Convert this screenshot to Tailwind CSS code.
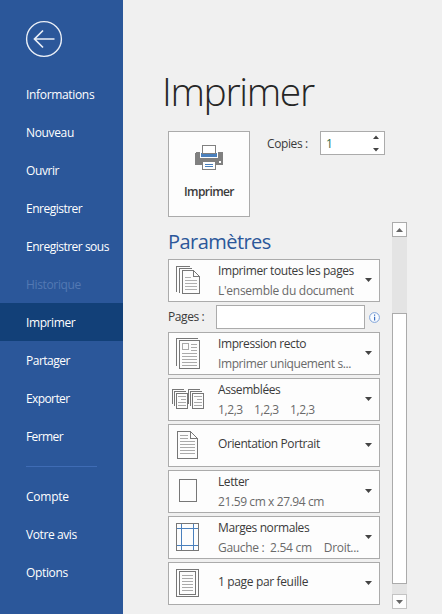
<!DOCTYPE html>
<html lang="fr">
<head>
<meta charset="utf-8">
<title>Imprimer</title>
<script src="https://cdn.jsdelivr.net/npm/@tailwindcss/browser@4"></script>
</head>
<body class="flex h-[614px] w-[442px] overflow-hidden bg-[#f0f0f0] font-['Open_Sans','Noto_Sans',sans-serif] text-[12px] tracking-[-0.4px] text-[#3b3b3b]">
<nav class="flex h-full w-[123px] shrink-0 flex-col bg-[#2b579a] text-white whitespace-nowrap">
  <div class="h-[76px] pl-[25px] pt-[20px]">
    <svg width="38" height="38" viewBox="0 0 38 38" fill="none" stroke="#e9eef6"><circle cx="19" cy="19" r="17.4" stroke-width="1.4"/><path d="M29.500 19H10M18 10.500L9.500 19L18 27.500" stroke-width="1.7"/></svg>
  </div>
  <a class="h-[38px] pl-[26px] leading-[38px] tracking-[-0.33px]">Informations</a>
  <a class="h-[38px] pl-[26px] leading-[38px] tracking-[-0.35px]">Nouveau</a>
  <a class="h-[38px] pl-[26px] leading-[38px]">Ouvrir</a>
  <a class="h-[38px] pl-[26px] leading-[38px] tracking-[-0.5px]">Enregistrer</a>
  <a class="h-[38px] pl-[26px] leading-[38px] tracking-[-0.5px]">Enregistrer sous</a>
  <a class="h-[37px] pl-[26px] leading-[38px] tracking-[-0.35px] text-[#5379b3]">Historique</a>
  <a class="h-[38px] bg-[#124078] pl-[26px] leading-[39px]">Imprimer</a>
  <a class="h-[38px] pl-[26px] leading-[39px] tracking-[-0.5px]">Partager</a>
  <a class="h-[38px] pl-[26px] leading-[39px] tracking-[-0.6px]">Exporter</a>
  <a class="h-[38px] pl-[26px] leading-[39px] tracking-[-0.6px]">Fermer</a>
  <div class="ml-[26px] mt-[11px] mb-[11px] h-px w-[71px] bg-[#3f6cb5]"></div>
  <a class="h-[38px] pl-[26px] leading-[38px] tracking-[-0.25px]">Compte</a>
  <a class="h-[38px] pl-[26px] leading-[38px]">Votre avis</a>
  <a class="h-[38px] pl-[26px] leading-[38px] tracking-[-0.35px]">Options</a>
</nav>
<main class="flex flex-1 flex-col pl-[45px] whitespace-nowrap">
  <h1 class="-ml-[6px] mt-[61px] h-[70px] text-[39px] font-light leading-[60px] tracking-[-1.35px] text-[#262626]">Imprimer</h1>
  <div class="flex h-[91px]">
    <button class="flex h-[86px] w-[82px] flex-col items-center border border-[#ababab] bg-[#fdfdfd] pt-[13px] font-semibold tracking-[-0.6px]">
      <svg width="28" height="26" viewBox="0 0 28 26" shape-rendering="crispEdges"><path d="M1 7H27L28 8V20H0V8Z" fill="#808080"/><path d="M5 6H23V13H5Z" fill="#fff"/><path d="M6 8H22V12H6Z" fill="#4a80bd"/><path d="M7.500 .5H20.500V8.500H7.500Z" fill="#fff" stroke="#808080"/><path d="M7.500 16.500H20.500V24.500H7.500Z" fill="#fff" stroke="#808080"/><path d="M10 19.500H18M10 21.500H18" stroke="#4a80bd"/><path d="M24 16H26V18H24Z" fill="#fff"/></svg>
      <span class="mt-[12px] leading-[18px]">Imprimer</span>
    </button>
    <span class="ml-[17px] w-[53px] leading-[25px]">Copies :</span>
    <div class="flex h-[24px] w-[65px] justify-between border border-[#ababab] bg-white pl-[5px] pr-[5px] text-[#2d6b4a]">
      <span class="leading-[23px]">1</span>
      <svg width="6" height="22" viewBox="0 0 6 22" fill="#444"><path d="M0 7L3 3.500L6 7ZM0 16L3 19.500L6 16Z"/></svg>
    </div>
  </div>
  <div class="flex">
    <section class="w-[212px]">
      <h2 class="h-[37px] text-[20px] leading-[39px] tracking-[-0.55px] text-[#2b579a]">Paramètres</h2>
      <div class="flex flex-col gap-[3px]">
        <div class="flex h-[43px] items-center border border-[#ababab] bg-[#fdfdfd] pr-[7px]">
          <svg class="-mt-px ml-[7px] mr-[17px] shrink-0" width="25" height="28" viewBox="0 0 25 28" fill="none" stroke="#777" shape-rendering="crispEdges"><path d="M.5 26V.5H14M3.500 27V2.500H16M17.500 4.500H6.500V27.500H23.500V10.500L17.500 4.500V10.500H23.500"/><path d="M9 11.500H15M9 14.500H21M9 17.500H21M9 20.500H21M9 23.500H21" stroke="#b0b0b0"/></svg>
          <div class="min-w-0 flex-1 leading-[20px]"><p>Imprimer toutes les pages</p><p class="tracking-[-0.27px] text-[#6a6a6a]">L'ensemble du document</p></div>
          <svg class="-mt-px shrink-0" width="7" height="4" viewBox="0 0 7 4"><path d="M0 0H7L3.500 4Z" fill="#444"/></svg>
        </div>
        <div class="flex h-[24px] w-[213px] items-center">
          <span class="w-[48px]">Pages :</span>
          <div class="h-[24px] w-[149px] border border-[#ababab] bg-white"></div>
          <svg class="ml-[4px]" width="11" height="11" viewBox="0 0 11 11"><circle cx="5.500" cy="5.500" r="4.900" fill="#f8fbff" stroke="#7fa3d8"/><path d="M5 2.500H6.200V3.700H5ZM5 4.700H6.200V8.500H5Z" fill="#3a6fc0"/></svg>
        </div>
        <div class="flex h-[43px] items-center border border-[#ababab] bg-[#fdfdfd] pr-[7px]">
          <svg class="ml-[7px] mr-[17px] shrink-0" width="25" height="31" viewBox="0 0 25 31" fill="none" stroke="#777" shape-rendering="crispEdges"><path d="M.5 28V.5H22M3.500 2.500H23.500V30.500H3.500Z"/><path d="M6.500 5.500H12.500V11.500H6.500ZM15 6.500H21M15 9.500H21M15 12.500H21M6 15.500H21M6 18.500H21M6 21.500H21M6 24.500H21M6 27.500H21" stroke="#aaa"/></svg>
          <div class="min-w-0 flex-1 leading-[20px]"><p>Impression recto</p><p class="text-[#6a6a6a]">Imprimer uniquement s...</p></div>
          <svg class="-mt-px shrink-0" width="7" height="4" viewBox="0 0 7 4"><path d="M0 0H7L3.500 4Z" fill="#444"/></svg>
        </div>
        <div class="flex h-[43px] items-center border border-[#ababab] bg-[#fdfdfd] pr-[7px]">
          <svg class="-mt-px ml-[3px] mr-[14px] shrink-0" width="32" height="20" viewBox="0 0 32 20" fill="none" stroke="#777" shape-rendering="crispEdges"><path d="M.5 15V.5H12M2.500 17V2.500H14M4.500 4.500H15.500V19.500H4.500ZM16.500 15V.5H28M18.500 17V2.500H30M20.500 4.500H31.500V19.500H20.500Z"/><path d="M6 7.500H14M9 10.500H14M6 13.500H14M6 16.500H14M22 7.500H30M25 10.500H30M22 13.500H30M22 16.500H30" stroke="#aaa"/></svg>
          <div class="min-w-0 flex-1 leading-[20px]"><p>Assemblées</p><p class="flex gap-[12px] text-[#6a6a6a]"><span class="w-[24px]">1,2,3</span><span class="w-[24px]">1,2,3</span><span>1,2,3</span></p></div>
          <svg class="-mt-px shrink-0" width="7" height="4" viewBox="0 0 7 4"><path d="M0 0H7L3.500 4Z" fill="#444"/></svg>
        </div>
        <div class="flex h-[43px] items-center border border-[#ababab] bg-[#fdfdfd] pr-[7px]">
          <svg class="-mt-px ml-[8px] mr-[20px] shrink-0" width="21" height="28" viewBox="0 0 21 28" fill="none" stroke="#777" shape-rendering="crispEdges"><path d="M13.500 .5H.5V27.500H20.500V7.500L13.500 .5V7.500H20.500"/><path d="M3 4.500H11M3 7.500H11M3 10.500H18M3 13.500H18M3 16.500H18M3 19.500H18M3 22.500H18" stroke="#aaa"/></svg>
          <p class="-mt-[3px] flex-1">Orientation Portrait</p>
          <svg class="-mt-px shrink-0" width="7" height="4" viewBox="0 0 7 4"><path d="M0 0H7L3.500 4Z" fill="#444"/></svg>
        </div>
        <div class="flex h-[43px] items-center border border-[#ababab] bg-[#fdfdfd] pr-[7px]">
          <svg class="-mt-[2px] ml-[10px] mr-[21px] shrink-0" width="18" height="23" viewBox="0 0 18 23" fill="none" stroke="#777" shape-rendering="crispEdges"><path d="M.5 .5H17.500V22.500H.5Z"/></svg>
          <div class="min-w-0 flex-1 leading-[20px]"><p>Letter</p><p class="text-[#6a6a6a]">21.59 cm x 27.94 cm</p></div>
          <svg class="-mt-px shrink-0" width="7" height="4" viewBox="0 0 7 4"><path d="M0 0H7L3.500 4Z" fill="#444"/></svg>
        </div>
        <div class="flex h-[43px] items-center border border-[#ababab] bg-[#fdfdfd] pr-[7px]">
          <svg class="-mt-px ml-[7px] mr-[19px] shrink-0" width="23" height="28" viewBox="0 0 23 28" fill="none" shape-rendering="crispEdges"><path d="M5.500 1V27M17.500 1V27M1 5.500H22M1 22.500H22" stroke="#4a80bd"/><path d="M.5 .5H22.500V27.500H.5Z" stroke="#777"/></svg>
          <div class="min-w-0 flex-1 leading-[20px]"><p>Marges normales</p><p class="flex gap-[12px] tracking-[-0.3px] text-[#6a6a6a]"><span>Gauche :&nbsp; 2.54 cm</span><span>Droit...</span></p></div>
          <svg class="-mt-px shrink-0" width="7" height="4" viewBox="0 0 7 4"><path d="M0 0H7L3.500 4Z" fill="#444"/></svg>
        </div>
        <div class="flex h-[43px] items-center border border-[#ababab] bg-[#fdfdfd] pr-[7px]">
          <svg class="-mt-px ml-[7px] mr-[19px] shrink-0" width="23" height="28" viewBox="0 0 23 28" fill="none" stroke="#777" shape-rendering="crispEdges"><path d="M.5 .5H22.500V27.500H.5ZM3.500 2.500H19.500V25.500H3.500Z"/><path d="M6 6.500H17M6 9.500H17M6 12.500H17M6 15.500H17M6 18.500H17M6 21.500H17" stroke="#aaa"/></svg>
          <p class="-mt-[3px] flex-1 tracking-[-0.35px]">1 page par feuille</p>
          <svg class="-mt-px shrink-0" width="7" height="4" viewBox="0 0 7 4"><path d="M0 0H7L3.500 4Z" fill="#444"/></svg>
        </div>
      </div>
    </section>
    <div class="ml-[12px] flex h-[387px] w-[15px] flex-col bg-[#e4e4e4]">
      <div class="flex h-[15px] items-center justify-center border border-[#ababab] bg-[#fdfdfd]"><svg width="7" height="4" viewBox="0 0 7 4"><path d="M0 4H7L3.500 0Z" fill="#666"/></svg></div>
      <div class="mt-[76px] h-[271px] border border-[#ababab] bg-white"></div>
      <div class="mt-auto flex h-[15px] items-center justify-center border border-[#c3c3c3] bg-[#fdfdfd]"><svg width="7" height="4" viewBox="0 0 7 4"><path d="M0 0H7L3.500 4Z" fill="#666"/></svg></div>
    </div>
  </div>
</main>
</body>
</html>
